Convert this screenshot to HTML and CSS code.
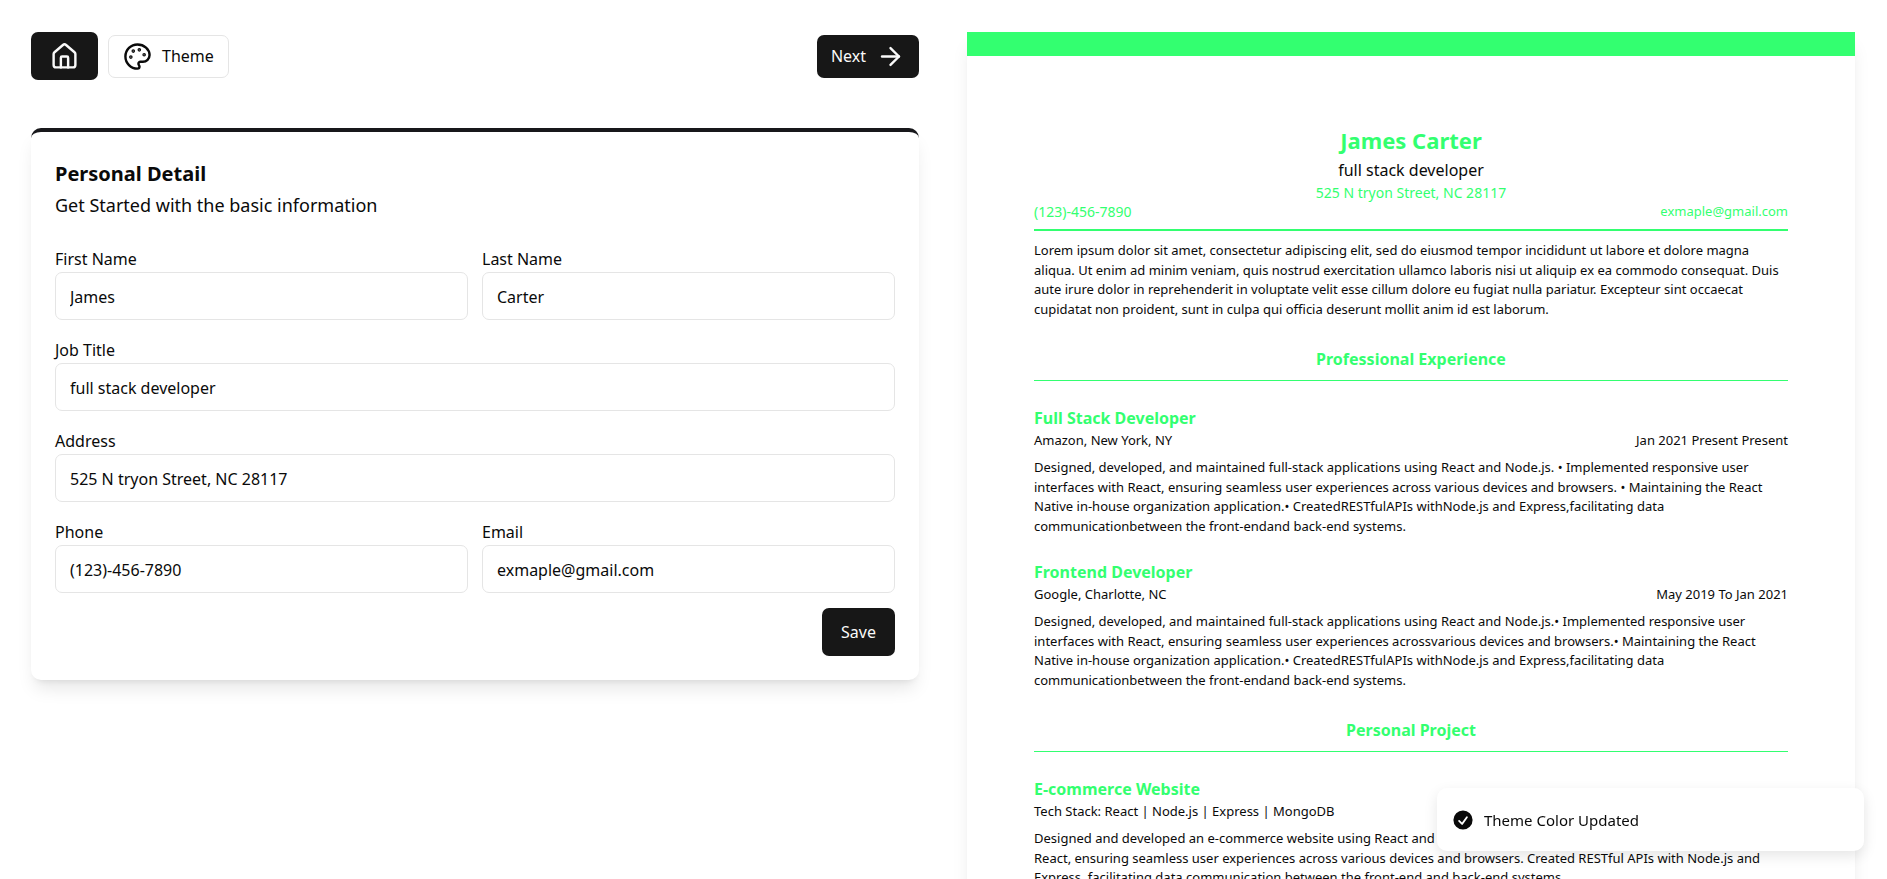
FILE: index.html
```html
<!DOCTYPE html>
<html lang="en">
<head>
<meta charset="utf-8">
<title>Resume Builder</title>
<link rel="stylesheet" href="styles.css">
</head>
<body>
<main class="editor">
  <section class="form-side">
    <div class="toolbar">
      <div class="toolbar-group">
        <a class="btn btn-dark btn-home" href="#" aria-label="Home">
          <svg class="icon" viewBox="0 0 24 24"><path d="M15 21v-8a1 1 0 0 0-1-1h-4a1 1 0 0 0-1 1v8"/><path d="M3 10a2 2 0 0 1 .709-1.528l7-5.999a2 2 0 0 1 2.582 0l7 5.999A2 2 0 0 1 21 10v9a2 2 0 0 1-2 2H5a2 2 0 0 1-2-2z"/></svg>
        </a>
        <button class="btn btn-outline btn-small" type="button">
          <svg class="icon" viewBox="0 0 24 24"><circle cx="13.5" cy="6.5" r=".5" fill="currentColor"/><circle cx="17.5" cy="10.5" r=".5" fill="currentColor"/><circle cx="8.5" cy="7.5" r=".5" fill="currentColor"/><circle cx="6.5" cy="12.5" r=".5" fill="currentColor"/><path d="M12 2C6.5 2 2 6.5 2 12s4.5 10 10 10c.926 0 1.648-.746 1.648-1.688 0-.437-.18-.835-.437-1.125-.29-.289-.438-.652-.438-1.125a1.64 1.64 0 0 1 1.668-1.668h1.996c3.051 0 5.555-2.503 5.555-5.554C21.965 6.012 17.461 2 12 2z"/></svg>
          Theme
        </button>
      </div>
      <button class="btn btn-dark btn-small" type="button">
        Next
        <svg class="icon" viewBox="0 0 24 24"><path d="M5 12h14"/><path d="m12 5 7 7-7 7"/></svg>
      </button>
    </div>

    <form class="card">
      <h2 class="card-title">Personal Detail</h2>
      <p class="card-subtitle">Get Started with the basic information</p>
      <div class="fields">
        <div class="field"><label for="first">First Name</label><input id="first" type="text" value="James"></div>
        <div class="field"><label for="last">Last Name</label><input id="last" type="text" value="Carter"></div>
        <div class="field field-wide"><label for="job">Job Title</label><input id="job" type="text" value="full stack developer"></div>
        <div class="field field-wide"><label for="address">Address</label><input id="address" type="text" value="525 N tryon Street, NC 28117"></div>
        <div class="field"><label for="phone">Phone</label><input id="phone" type="text" value="(123)-456-7890"></div>
        <div class="field"><label for="email">Email</label><input id="email" type="text" value="exmaple@gmail.com"></div>
      </div>
      <div class="actions"><button class="btn btn-dark btn-save" type="button">Save</button></div>
    </form>
  </section>

  <article class="resume">
    <header>
      <h1 class="name">James Carter</h1>
      <p class="role">full stack developer</p>
      <p class="contact contact-center">525 N tryon Street, NC 28117</p>
      <div class="contact contact-row"><span>(123)-456-7890</span><span class="mail">exmaple@gmail.com</span></div>
    </header>
    <p class="summary">Lorem ipsum dolor sit amet, consectetur adipiscing elit, sed do eiusmod tempor incididunt ut labore et dolore magna<br>aliqua. Ut enim ad minim veniam, quis nostrud exercitation ullamco laboris nisi ut aliquip ex ea commodo consequat. Duis<br>aute irure dolor in reprehenderit in voluptate velit esse cillum dolore eu fugiat nulla pariatur. Excepteur sint occaecat<br>cupidatat non proident, sunt in culpa qui officia deserunt mollit anim id est laborum.</p>

    <section class="block">
      <h2 class="block-title">Professional Experience</h2>
      <div class="entry">
        <h3 class="entry-title">Full Stack Developer</h3>
        <div class="entry-meta"><span>Amazon, New York, NY</span><span>Jan 2021 Present Present</span></div>
        <p class="entry-text">Designed, developed, and maintained full-stack applications using React and Node.js. • Implemented responsive user interfaces with React, ensuring seamless user experiences across various devices and browsers. • Maintaining the React Native in-house organization application.• CreatedRESTfulAPIs withNode.js and Express,facilitating data communicationbetween the front-endand back-end systems.</p>
      </div>
      <div class="entry">
        <h3 class="entry-title">Frontend Developer</h3>
        <div class="entry-meta"><span>Google, Charlotte, NC</span><span>May 2019 To Jan 2021</span></div>
        <p class="entry-text">Designed, developed, and maintained full-stack applications using React and Node.js.• Implemented responsive user interfaces with React, ensuring seamless user experiences acrossvarious devices and browsers.• Maintaining the React Native in-house organization application.• CreatedRESTfulAPIs withNode.js and Express,facilitating data communicationbetween the front-endand back-end systems.</p>
      </div>
    </section>

    <section class="block">
      <h2 class="block-title">Personal Project</h2>
      <div class="entry">
        <h3 class="entry-title">E-commerce Website</h3>
        <div class="entry-meta"><span>Tech Stack: React | Node.js | Express | MongoDB</span></div>
        <p class="entry-text">Designed and developed an e-commerce website using React and Node.js. Implemented user interfaces with<br>React, ensuring seamless user experiences across various devices and browsers. Created RESTful APIs with Node.js and<br>Express, facilitating data communication between the front-end and back-end systems.</p>
      </div>
    </section>
  </article>
</main>

<div class="toast" role="status">
  <svg class="toast-icon" viewBox="0 0 20 20" fill="currentColor"><path fill-rule="evenodd" clip-rule="evenodd" d="M10 18a8 8 0 1 0 0-16 8 8 0 0 0 0 16zm3.857-9.809a.75.75 0 0 0-1.214-.882l-3.483 4.79-1.88-1.88a.75.75 0 1 0-1.06 1.061l2.5 2.5a.75.75 0 0 0 1.137-.089l4-5.5z"/></svg>
  Theme Color Updated
</div>
</body>
</html>
```
FILE: styles.css
```css
:root {
  --ink: #0a0a0a;
  --dark: #171717;
  --line: #e5e5e5;
  --theme: #33ff70;
  --shadow: 0 12px 18px -4px rgba(0, 0, 0, .1), 0 5px 7px -5px rgba(0, 0, 0, .1);
}

* {
  box-sizing: border-box;
  margin: 0;
  padding: 0;
}

body {
  height: 100vh;
  overflow: hidden;
  background: #fff;
  color: var(--ink);
  font: 16px/26px "Noto Sans", "Open Sans", sans-serif;
}

.editor {
  display: grid;
  grid-template-columns: 1fr 1fr;
  align-items: start;
  gap: 48px;
  padding: 32px 32px 32px 31px;
}

/* toolbar */
.toolbar,
.toolbar-group {
  display: flex;
  align-items: center;
  gap: 10px;
}

.toolbar {
  justify-content: space-between;
  margin-bottom: 48px;
}

.btn {
  display: inline-flex;
  align-items: center;
  justify-content: center;
  gap: 10px;
  height: 48px;
  padding: 0 19px;
  border: 0;
  border-radius: 7px;
  font: inherit;
  cursor: pointer;
}

.btn-dark {
  background: var(--dark);
  color: #fafafa;
}

.btn-outline {
  border: 1px solid var(--line);
  background: #fff;
  color: var(--ink);
}

.btn-small {
  height: 43px;
  padding: 0 14px;
}

.icon {
  width: 29px;
  height: 29px;
  fill: none;
  stroke: currentColor;
  stroke-width: 2;
  stroke-linecap: round;
  stroke-linejoin: round;
}

/* form card */
.card {
  padding: 24px;
  border-top: 4px solid #18181b;
  border-radius: 10px;
  background: #fff;
  box-shadow: var(--shadow);
}

.card-title {
  font-size: 20px;
  line-height: 36px;
}

.card-subtitle {
  font-size: 18px;
}

.fields {
  display: grid;
  grid-template-columns: 1fr 1fr;
  gap: 17px 14px;
  margin-top: 28px;
}

.field-wide {
  grid-column: 1 / -1;
}

.field label {
  display: block;
}

.field input {
  display: block;
  width: 100%;
  height: 48px;
  padding: 1px 14px 0;
  border: 1px solid var(--line);
  border-radius: 7px;
  background: #fff;
  color: inherit;
  font: inherit;
}

.actions {
  display: flex;
  justify-content: flex-end;
  margin-top: 15px;
}

/* resume preview */
.resume {
  padding: 67px;
  border-top: 24px solid var(--theme);
  background: #fff;
  box-shadow: var(--shadow);
}

.name,
.role,
.contact-center,
.block-title {
  text-align: center;
}

.name {
  color: var(--theme);
  font-size: 22px;
  line-height: 34px;
}

.contact {
  color: var(--theme);
  font-size: 14px;
  line-height: 19px;
}

.contact-row {
  display: flex;
  justify-content: space-between;
  padding-bottom: 8px;
  border-bottom: 2px solid var(--theme);
}

.mail {
  font-size: 13px;
}

.summary,
.entry-text {
  font-size: 13px;
  line-height: 1.5;
}

.summary {
  margin-top: 10px;
}

.block {
  margin-top: 27px;
}

.block-title {
  margin-bottom: 24px;
  padding-bottom: 8px;
  border-bottom: 1px solid var(--theme);
  color: var(--theme);
  font-size: 16px;
}

.entry + .entry {
  margin-top: 23px;
}

.entry-title {
  color: var(--theme);
  font-size: 16px;
}

.entry-meta {
  display: flex;
  justify-content: space-between;
  margin-bottom: 8px;
  font-size: 13px;
  line-height: 19px;
}

/* notification */
.toast {
  position: fixed;
  right: 23px;
  bottom: 28px;
  display: flex;
  align-items: center;
  gap: 9px;
  width: 427px;
  height: 63px;
  padding: 0 14px;
  border-radius: 10px;
  background: #fff;
  box-shadow: 0 5px 14px rgba(0, 0, 0, .1);
  font-size: 15px;
}

.toast-icon {
  width: 24px;
  height: 24px;
}
```
